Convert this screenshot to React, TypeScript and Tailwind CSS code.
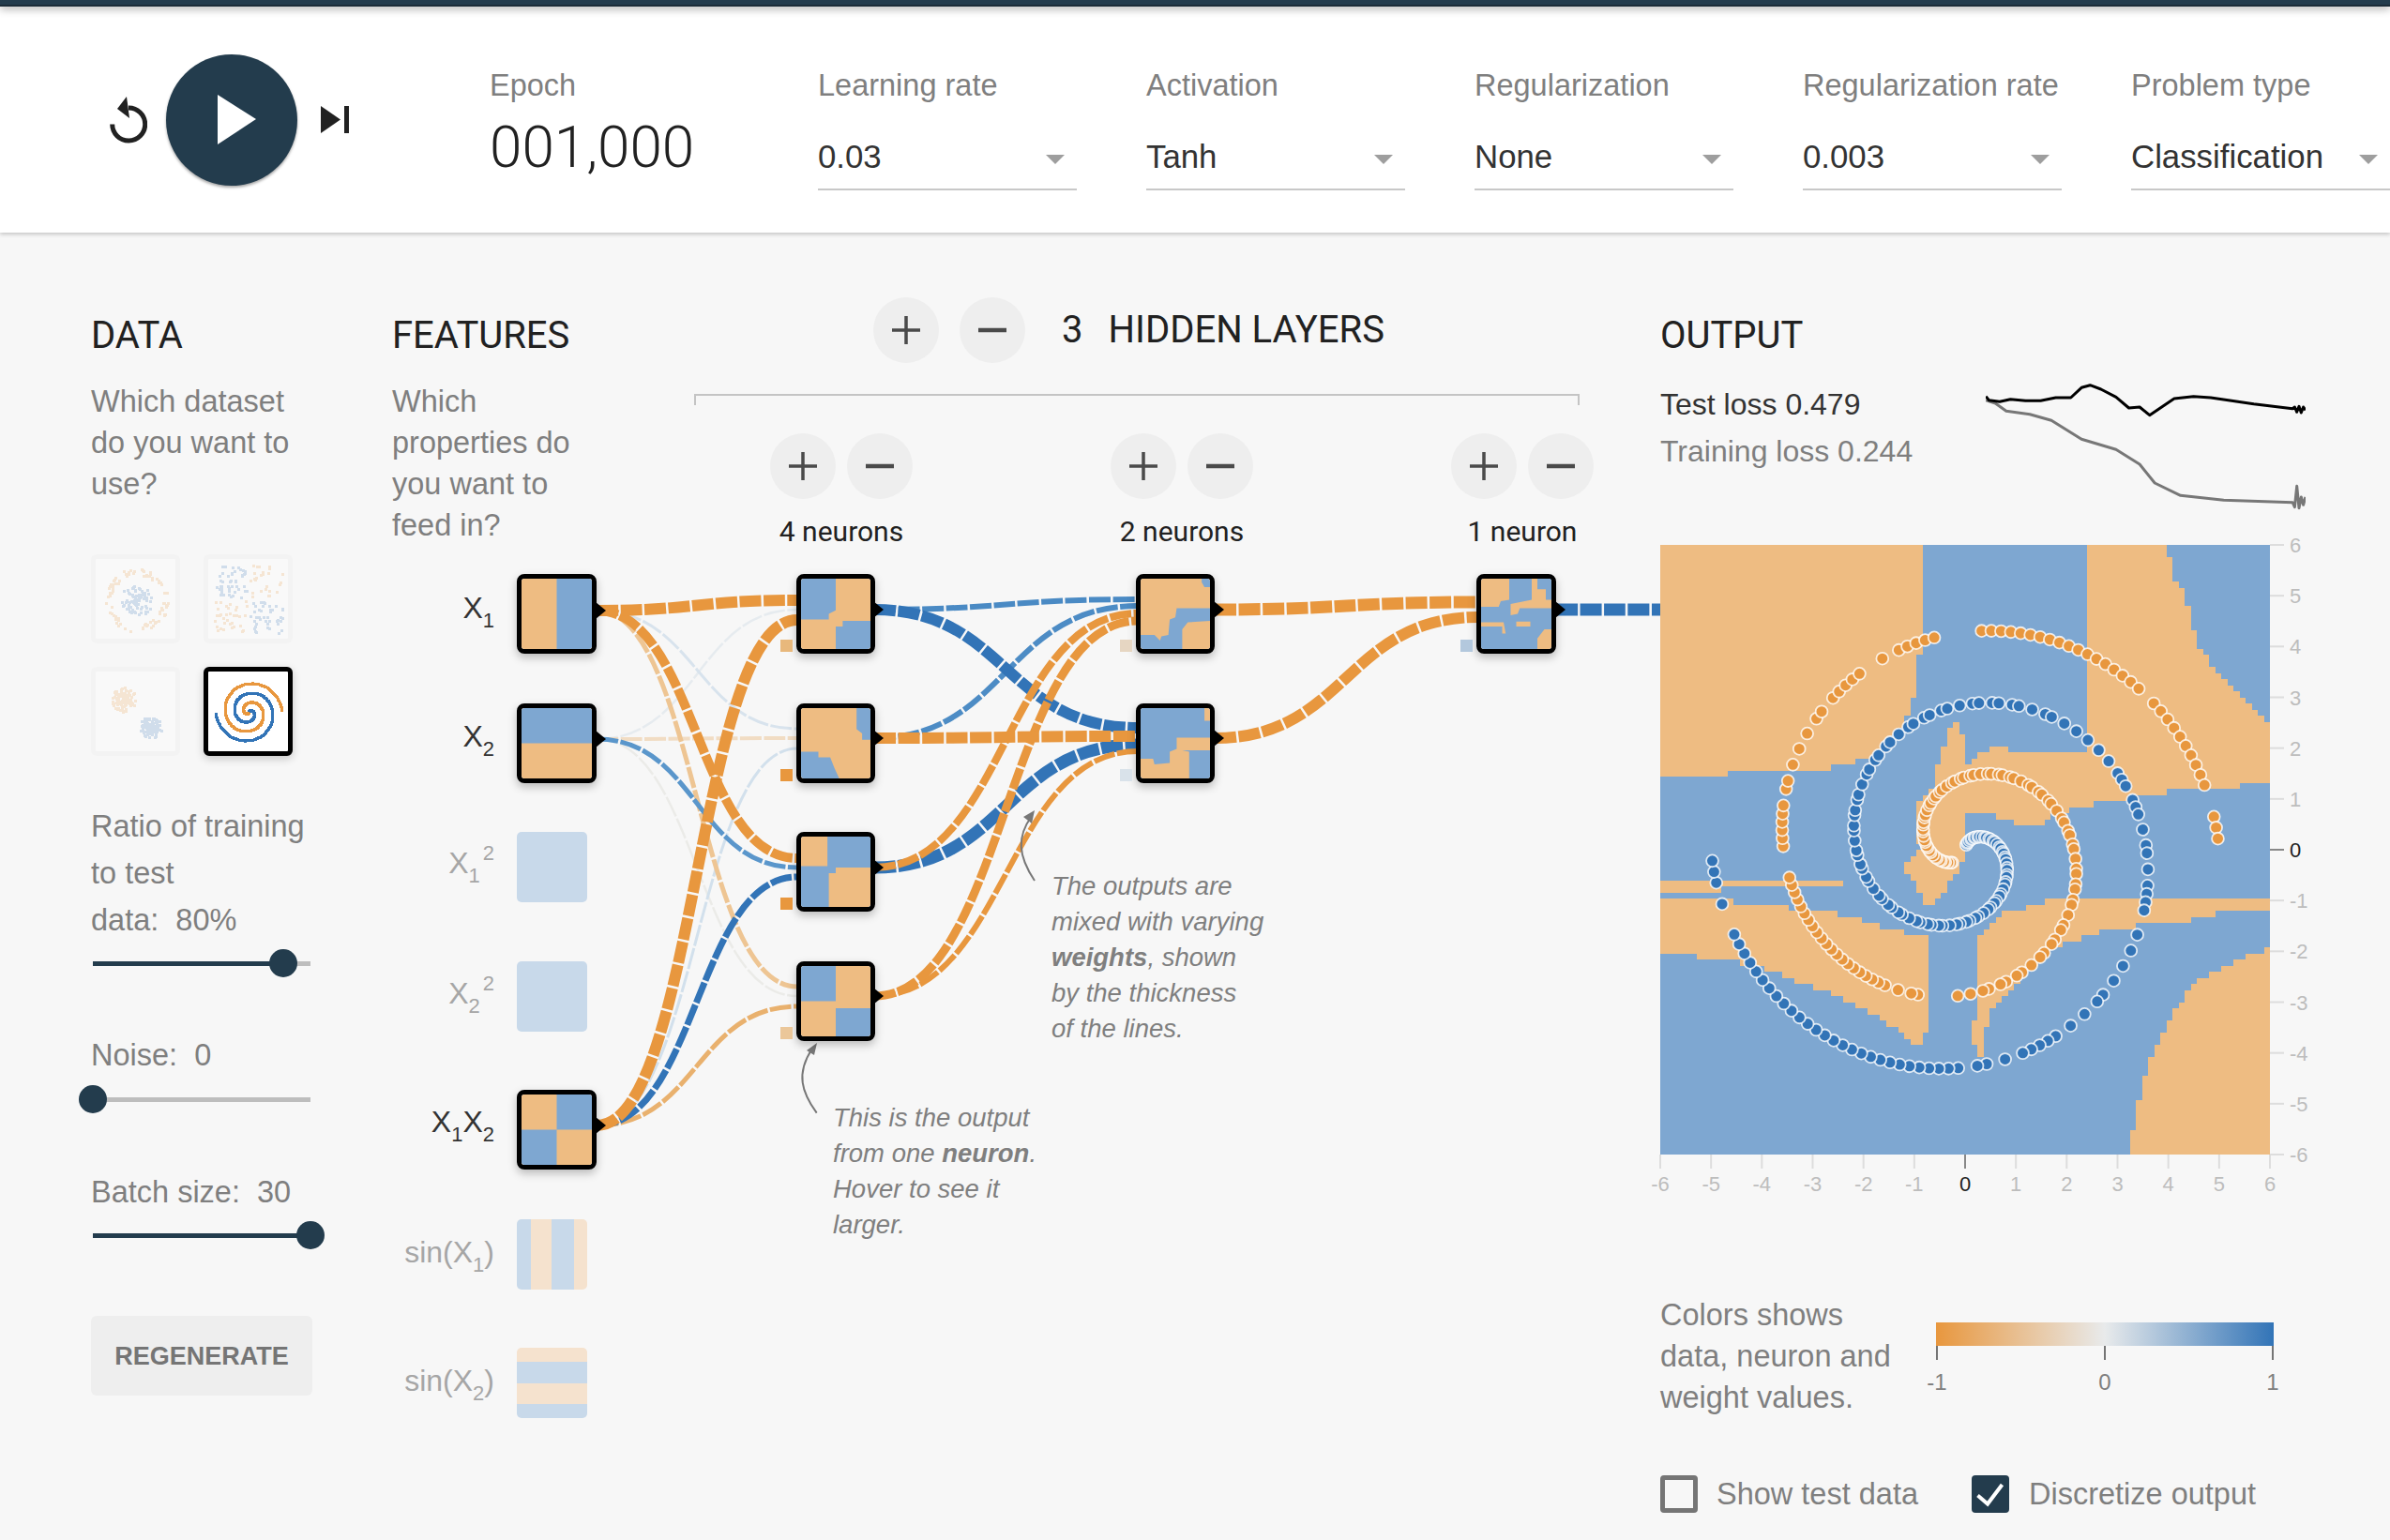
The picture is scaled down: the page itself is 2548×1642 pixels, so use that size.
import React from "react";

const ORANGE = "#eebc82";
const BLUE = "#7ea7d1";
const LINK_ORANGE = "#e8973e";
const LINK_BLUE = "#3274b7";
const NET_X = 418;
const NET_Y = 248;

type Pt = [number, number];

// Stair-step a polygon on the 6.5px cell grid of the decision map
function stairs(zoomPts: Pt[]) {
  const cell = 6.5;
  const snap = (v: number) => Math.round(v / cell) * cell;
  const pts = zoomPts.map(([x, y]): Pt => [snap((x - 22) / 2.24), snap((y - 25) / 2.24)]);
  const out: Pt[] = [];
  pts.forEach((p, idx) => {
    const q = pts[(idx + 1) % pts.length];
    const n = Math.max(Math.abs(q[0] - p[0]), Math.abs(q[1] - p[1])) / cell;
    if (p[0] === q[0] || p[1] === q[1] || n < 1) {
      out.push(p);
      return;
    }
    let py = p[1];
    for (let i = 0; i < n; i++) {
      const x = snap(p[0] + ((q[0] - p[0]) * i) / n);
      const y = snap(p[1] + ((q[1] - p[1]) * i) / n);
      out.push([x, py], [x, y]);
      py = y;
    }
    out.push([q[0], py]);
  });
  return out.map((p) => p.join(",")).join(" ");
}

const mapRegions: Pt[][] = [
  [[22, 25], [648, 25], [648, 290], [634, 300], [634, 375], [615, 420], [590, 470], [540, 530], [430, 548], [430, 562], [340, 565], [22, 578]],
  [[1043, 25], [1230, 25], [1232, 50], [1250, 60], [1250, 110], [1270, 140], [1290, 220], [1310, 270], [1350, 330], [1400, 385], [1478, 460], [1478, 590], [1410, 590], [1400, 605], [1240, 610], [1225, 625], [1100, 630], [1090, 640], [1040, 655], [960, 670], [935, 695], [890, 695], [860, 680], [800, 665], [770, 650], [745, 700], [745, 770], [720, 820], [670, 885], [650, 885], [650, 850], [605, 800], [605, 775], [650, 745], [640, 720], [640, 640], [670, 600], [680, 545], [690, 520], [710, 480], [725, 435], [745, 510], [750, 545], [780, 520], [820, 507], [870, 520], [1043, 515]],
  [[1478, 870], [1478, 895], [1365, 900], [1340, 910], [1225, 925], [1100, 940], [1050, 960], [1000, 975], [975, 990], [940, 1010], [900, 1040], [860, 1090], [840, 1110], [810, 1150], [790, 1200], [790, 1245], [780, 1230], [770, 1190], [765, 1160], [785, 1130], [780, 960], [800, 945], [840, 905], [940, 885], [945, 870]],
  [[22, 870], [195, 870], [200, 885], [440, 900], [450, 910], [540, 930], [550, 945], [660, 960], [660, 1160], [650, 1220], [625, 1215], [610, 1190], [560, 1165], [540, 1150], [420, 1090], [300, 1050], [200, 1015], [50, 1000], [22, 985]],
  [[22, 828], [455, 825], [458, 838], [320, 845], [22, 855]],
  [[1478, 985], [1450, 1005], [1400, 1020], [1345, 1050], [1300, 1080], [1250, 1140], [1230, 1180], [1190, 1280], [1170, 1320], [1160, 1400], [1145, 1450], [1145, 1480], [1478, 1480]],
];

const orangeGaps = new Set([245, 246, 234, 212, 213, 214, 215, 206, 204, 203, 197, 194, 192, 190, 188, 185, 178, 177, 176, 145, 146, 147, 148]);
const blueGaps = new Set([246, 244, 243, 214, 211, 209, 203, 201, 199, 196, 194, 192, 190, 188, 187, 182, 180, 177, 175, 171, 167, 165, 163, 161, 159, 157]);

function spiral(delta: number, gaps: Set<number>, from: number) {
  const pts: Pt[] = [];
  for (let i = from; i < 250; i++) {
    if (gaps.has(i)) continue;
    if (i < 156 && (i * 37) % 11 < 4) continue;
    const r = (i / 250) * 5;
    const t = (1.75 * i * 2 * Math.PI) / 250 + delta;
    pts.push([r * Math.sin(t), r * Math.cos(t)]);
  }
  return pts;
}

const orangeDots = spiral(Math.PI, orangeGaps, 18);
const blueDots = spiral(0, blueGaps, 5);

function seeded(seed: number) {
  let s = seed;
  return () => {
    s = (s * 16807) % 2147483647;
    return s / 2147483647;
  };
}

type Link = { from: Pt; to: Pt; w: number; c: string };
const diag = (s: Pt, t: Pt) => {
  const m = (s[0] + t[0]) / 2;
  return `M${s[0]},${s[1]} C${m},${s[1]} ${m},${t[1]} ${t[0]},${t[1]}`;
};

const X1: Pt = [636, 651];
const X2: Pt = [636, 788];
const XX: Pt = [636, 1200];
const N1: Pt = [932, 650];
const N2: Pt = [932, 787];
const N3: Pt = [932, 925];
const N4: Pt = [932, 1062];
const A: Pt = [1295, 650];
const B: Pt = [1295, 787];

const links: Link[] = [
  { from: X2, to: [850, 1062], w: 2.5, c: "#ebebe8" },
  { from: X2, to: [850, 650], w: 2.5, c: "#e6ebef" },
  { from: X1, to: [850, 777], w: 3, c: "#d8e3ed" },
  { from: XX, to: [850, 798], w: 3, c: "#d2e0ec" },
  { from: X2, to: [850, 787], w: 4, c: "#f1dcc3" },
  { from: X1, to: [850, 1052], w: 5, c: "#eec593" },
  { from: XX, to: [850, 1073], w: 5, c: "#e9b16e" },
  { from: X2, to: [850, 925], w: 5, c: "#5a96cb" },
  { from: XX, to: [850, 935], w: 7, c: LINK_BLUE },
  { from: X1, to: [850, 915], w: 10, c: LINK_ORANGE },
  { from: XX, to: [850, 661], w: 12, c: LINK_ORANGE },
  { from: X1, to: [850, 640], w: 12, c: LINK_ORANGE },
  { from: N1, to: [1213, 639], w: 6, c: "#4a8ac4" },
  { from: N2, to: [1213, 646], w: 6, c: "#4d8cc5" },
  { from: N1, to: [1213, 776], w: 12, c: LINK_BLUE },
  { from: N3, to: [1213, 794], w: 13, c: LINK_BLUE },
  { from: N4, to: [1213, 801], w: 6, c: LINK_ORANGE },
  { from: N3, to: [1213, 654], w: 8, c: LINK_ORANGE },
  { from: N4, to: [1213, 662], w: 9, c: LINK_ORANGE },
  { from: N2, to: [1213, 785], w: 12, c: LINK_ORANGE },
  { from: A, to: [1576, 642], w: 13, c: LINK_ORANGE },
  { from: B, to: [1576, 658], w: 12, c: LINK_ORANGE },
  { from: [1659, 650], to: [1771, 650], w: 13, c: LINK_BLUE },
];

const tips: Pt[] = [X1, X2, XX, N1, N2, N3, N4, A, B, [1659, 650]];

type Pic = { bg: string; polys: { c: string; p: string }[] };
const pics: Record<string, Pic> = {
  x1: { bg: ORANGE, polys: [{ c: BLUE, p: "50,0 100,0 100,100 50,100" }] },
  x2: { bg: ORANGE, polys: [{ c: BLUE, p: "0,0 100,0 100,50 0,50" }] },
  xx: { bg: ORANGE, polys: [{ c: BLUE, p: "50,0 100,0 100,50 50,50" }, { c: BLUE, p: "0,50 50,50 50,100 0,100" }] },
  n1: { bg: ORANGE, polys: [{ c: BLUE, p: "0,0 50,0 50,45 40,50 40,58 0,58" }, { c: BLUE, p: "50,100 50,68 60,68 60,60 100,60 100,100" }] },
  n2: { bg: ORANGE, polys: [{ c: BLUE, p: "80,0 100,0 100,45 88,45 88,36 80,30" }, { c: BLUE, p: "0,62 25,62 25,70 42,70 48,85 55,100 0,100" }] },
  n3: { bg: BLUE, polys: [{ c: ORANGE, p: "0,0 38,0 38,42 0,42" }, { c: ORANGE, p: "100,44 50,44 50,52 40,52 40,100 100,100" }] },
  n4: { bg: ORANGE, polys: [{ c: BLUE, p: "0,0 50,0 50,50 0,50" }, { c: BLUE, p: "50,60 100,60 100,100 50,100" }] },
  a: { bg: ORANGE, polys: [{ c: BLUE, p: "88,0 100,0 100,12 92,12 88,5" }, { c: BLUE, p: "100,42 52,42 50,55 42,58 40,80 30,82 28,88 20,80 0,80 0,100 60,100 60,72 68,62 100,60" }] },
  b: { bg: BLUE, polys: [{ c: ORANGE, p: "92,0 100,0 100,18 92,18" }, { c: ORANGE, p: "100,42 52,42 52,58 42,62 42,78 20,80 18,72 0,72 0,100 70,100 70,62 60,60 100,60" }] },
  c: {
    bg: BLUE,
    polys: [
      { c: ORANGE, p: "0,0 40,0 40,30 28,32 25,40 0,40" },
      { c: ORANGE, p: "72,0 80,0 80,15 92,15 92,30 100,30 100,42 55,42 52,50 42,52 42,36 72,30" },
      { c: ORANGE, p: "50,61 70,61 70,68 50,68" },
      { c: ORANGE, p: "0,62 32,62 35,78 30,78 30,68 0,68" },
      { c: ORANGE, p: "80,100 80,85 90,72 100,72 100,100" },
    ],
  },
};

const PLUS = (
  <svg width="30" height="30" viewBox="0 0 30 30">
    <path d="M0 15H30M15 0V30" stroke="#4a4a4a" strokeWidth="3.5" />
  </svg>
);
const MINUS = (
  <svg width="30" height="30" viewBox="0 0 30 30">
    <path d="M0 15H30" stroke="#4a4a4a" strokeWidth="4.5" />
  </svg>
);

function RoundButton({ minus }: { minus?: boolean }) {
  return (
    <button className="w-[70px] h-[70px] shrink-0 rounded-full bg-[#eeeeee] flex items-center justify-center">
      {minus ? MINUS : PLUS}
    </button>
  );
}

function Field({ label, value }: { label: string; value: string }) {
  return (
    <div className="w-[350px] self-start mt-[62px] shrink-0 font-['Liberation_Sans',sans-serif] font-normal">
      <div className="text-[32.5px] leading-[44px] text-[#7f7f7f]">{label}</div>
      <div className="mt-[31px] w-[276px] h-[59px] border-b-2 border-[#c8c8c8] flex justify-between text-[34.8px] leading-[46px] text-[#333333]">
        <span>{value}</span>
        <svg className="mt-[21px] mr-[13px] shrink-0" width="20" height="10" viewBox="0 0 20 10">
          <path d="M0 0H20L10 10Z" fill="#9e9e9e" />
        </svg>
      </div>
    </div>
  );
}

function Header() {
  return (
    <header className="relative h-[248px] bg-white shadow-[0_2px_4px_rgba(0,0,0,0.2)] flex items-center pt-[7px] z-10">
      <div className="absolute left-0 right-0 top-0 h-[7px] bg-[#233c4d] border-b-2 border-[#1b2c38] shadow-[0_3px_8px_rgba(0,0,0,0.3)]" />
      <svg className="ml-[117px] shrink-0" width="40" height="50" viewBox="117 100 40 50">
        <path d="M119.7 129.5A17.5 17.5 0 1 0 137 112" fill="none" stroke="#212121" strokeWidth="5" />
        <path d="M135 100L125 113L138 123Z" fill="#212121" />
      </svg>
      <button className="ml-[20px] w-[140px] h-[140px] shrink-0 rounded-full bg-[#233c4d] shadow-[0_2px_3px_rgba(0,0,0,0.35)] flex items-center justify-center">
        <svg className="ml-[10px]" width="41" height="53" viewBox="0 0 41 53">
          <path d="M0 0L41 26L0 53Z" fill="#ffffff" />
        </svg>
      </button>
      <svg className="ml-[25px] shrink-0" width="30" height="30" viewBox="0 0 30 30">
        <path d="M0 0L21 14.5L0 29Z" fill="#212121" />
        <rect x="25" y="0" width="5" height="29" fill="#212121" />
      </svg>
      <div className="ml-[150px] w-[350px] self-start mt-[62px] shrink-0">
        <div className="text-[32.5px] leading-[44px] text-[#7f7f7f] font-normal font-['Liberation_Sans',sans-serif]">Epoch</div>
        <div className="mt-[13px] text-[62px] leading-none text-[#212121]">001,000</div>
      </div>
      <Field label="Learning rate" value="0.03" />
      <Field label="Activation" value="Tanh" />
      <Field label="Regularization" value="None" />
      <Field label="Regularization rate" value="0.003" />
      <Field label="Problem type" value="Classification" />
    </header>
  );
}

function DatasetThumb({ kind, selected }: { kind: string; selected?: boolean }) {
  const rects: { x: number; y: number; c: string }[] = [];
  const rand = seeded(kind.length * 977 + kind.charCodeAt(0));
  const add = (x: number, y: number, c: string) => rects.push({ x: Math.round(x), y: Math.round(y), c });
  if (kind === "circle") {
    for (let i = 0; i < 90; i++) {
      const t = rand() * 6.283;
      const r = rand() * 17;
      add(43 + r * Math.cos(t), 43 + r * Math.sin(t), LINK_BLUE);
      const t2 = rand() * 6.283;
      const r2 = 27 + rand() * 7;
      add(43 + r2 * Math.cos(t2), 43 + r2 * Math.sin(t2), LINK_ORANGE);
    }
  } else if (kind === "xor") {
    for (let i = 0; i < 170; i++) {
      const x = 6 + rand() * 72;
      const y = 6 + rand() * 72;
      if (Math.abs(x - 42) < 2 || Math.abs(y - 42) < 2) continue;
      add(x, y, x < 42 === y < 42 ? LINK_BLUE : LINK_ORANGE);
    }
  } else if (kind === "gauss") {
    for (let i = 0; i < 110; i++) {
      const t = rand() * 6.283;
      const r = rand() * 13;
      add(29 + r * Math.cos(t), 29 + r * Math.sin(t), LINK_ORANGE);
      const t2 = rand() * 6.283;
      const r2 = rand() * 12;
      add(58 + r2 * Math.cos(t2), 58 + r2 * Math.sin(t2), LINK_BLUE);
    }
  } else {
    for (let i = 0; i < 250; i++) {
      const r = (i / 250) * 5 * 7.08;
      const t = (1.75 * i * 2 * Math.PI) / 250;
      add(42 + r * Math.sin(t), 42 - r * Math.cos(t), LINK_BLUE);
      add(42 - r * Math.sin(t), 42 + r * Math.cos(t), LINK_ORANGE);
    }
  }
  return (
    <div
      className={
        selected
          ? "w-[95px] h-[95px] border-[5px] border-black rounded-[6px] bg-white shadow-[0_3px_10px_rgba(0,0,0,0.2)]"
          : "w-[95px] h-[95px] border-[5px] border-[#f3f3f3] rounded-[6px] bg-[#f9f9f9]"
      }
    >
      <svg width="85" height="85" viewBox="0 0 85 85" shapeRendering="crispEdges" className={selected ? "" : "opacity-20"}>
        {rects.map((r, i) => (
          <rect key={i} x={r.x} y={r.y} width="3" height="3" fill={r.c} />
        ))}
      </svg>
    </div>
  );
}

function Slider({ pct }: { pct: number }) {
  return (
    <div className="relative w-[232px] h-[5px] ml-[2px] bg-[#bdbdbd]">
      <div className="h-full bg-[#233c4d]" style={{ width: `${pct}%` }} />
      <div
        className="absolute top-[-13px] w-[30px] h-[30px] ml-[-15px] rounded-full bg-[#233c4d]"
        style={{ left: `${pct}%` }}
      />
    </div>
  );
}

const TITLE = "text-[40px] leading-none font-normal text-[#212121] font-[Roboto,sans-serif]";
const BODY = "text-[32.5px] leading-[44px] text-[#7f7f7f] font-normal font-['Liberation_Sans',sans-serif]";

function DataColumn() {
  return (
    <div className={`w-[321px] ml-[97px] pt-[90px] shrink-0 ${BODY}`}>
      <h4 className={TITLE}>DATA</h4>
      <p className="mt-[28px]">
        Which dataset
        <br />
        do you want to
        <br />
        use?
      </p>
      <div className="mt-[53px] grid grid-cols-[95px_95px] gap-x-[25px] gap-y-[25px]">
        <DatasetThumb kind="circle" />
        <DatasetThumb kind="xor" />
        <DatasetThumb kind="gauss" />
        <DatasetThumb kind="spiral" selected />
      </div>
      <p className="mt-[50px] leading-[50px]">
        Ratio of training
        <br />
        to test
        <br />
        data:&nbsp;&nbsp;80%
      </p>
      <div className="mt-[19px]">
        <Slider pct={87.5} />
      </div>
      <p className="mt-[70px] leading-[50px]">Noise:&nbsp;&nbsp;0</p>
      <div className="mt-[20px]">
        <Slider pct={0} />
      </div>
      <p className="mt-[71px] leading-[50px]">Batch size:&nbsp;&nbsp;30</p>
      <div className="mt-[19px]">
        <Slider pct={100} />
      </div>
      <button className="mt-[83px] w-[236px] h-[85px] rounded-[6px] bg-[#eeeeee] text-[27px] font-bold text-[#757575]">
        REGENERATE
      </button>
    </div>
  );
}

function NeuronControl({ label }: { label: string }) {
  return (
    <div className="w-[152px] shrink-0">
      <div className="flex justify-between">
        <RoundButton />
        <RoundButton minus />
      </div>
      <div className="mt-[17px] text-center text-[30px] leading-[36px] font-normal text-[#212121] whitespace-nowrap">{label}</div>
    </div>
  );
}

function Node({ x, y, w, pic }: { x: number; y: number; w: number; pic: string }) {
  const p = pics[pic];
  return (
    <div
      className="absolute h-[85px] border-[5px] border-black rounded-[8px] overflow-hidden shadow-[0_4px_10px_rgba(0,0,0,0.25)]"
      style={{ left: x - NET_X, top: y - NET_Y, width: w }}
    >
      <svg className="w-full h-full" viewBox="0 0 100 100" preserveAspectRatio="none">
        <rect width="100" height="100" fill={p.bg} />
        {p.polys.map((q, i) => (
          <polygon key={i} points={q.p} fill={q.c} />
        ))}
      </svg>
    </div>
  );
}

function FlatFeature({ y, stripes }: { y: number; stripes?: string }) {
  return (
    <div
      className={`absolute left-[133px] w-[75px] h-[75px] rounded-[5px] bg-[#c8d9ea] overflow-hidden ${stripes ?? ""}`}
      style={{ top: y - NET_Y }}
    />
  );
}

function FeatureLabel({ y, active, children }: { y: number; active?: boolean; children: React.ReactNode }) {
  return (
    <div
      className={`absolute right-[1243px] text-[32px] leading-none whitespace-nowrap font-normal font-['Liberation_Sans',sans-serif] ${active ? "text-[#333333]" : "text-[#a6a6a6]"}`}
      style={{ top: y - 27 - NET_Y }}
    >
      {children}
    </div>
  );
}

const Sub = ({ children }: { children: React.ReactNode }) => (
  <span className="relative top-[10px] text-[22px]">{children}</span>
);
const Sup = ({ children }: { children: React.ReactNode }) => (
  <span className="relative top-[-14px] ml-[3px] text-[22px]">{children}</span>
);

const biases: { x: number; y: number; c: string }[] = [
  { x: 832, y: 682, c: "#e8b87c" },
  { x: 832, y: 820, c: "#e8973e" },
  { x: 832, y: 957, c: "#e8973e" },
  { x: 832, y: 1095, c: "#ebc79a" },
  { x: 1194, y: 682, c: "#e6d6c2" },
  { x: 1194, y: 820, c: "#d9e2ea" },
  { x: 1557, y: 682, c: "#b3c8dd" },
];

function Network() {
  return (
    <div className="relative w-[1352px] h-[1394px] shrink-0">
      <div className="flex">
        <div className={`w-[322px] pt-[90px] shrink-0 ${BODY}`}>
          <h4 className={TITLE}>FEATURES</h4>
          <p className="mt-[28px]">
            Which
            <br />
            properties do
            <br />
            you want to
            <br />
            feed in?
          </p>
        </div>
        <div className="w-[944px] pt-[69px] shrink-0">
          <div className="flex items-center ml-[191px]">
            <RoundButton />
            <div className="ml-[22px]">
              <RoundButton minus />
            </div>
            <span className="ml-[39px] text-[40px] font-normal text-[#212121]">3</span>
            <span className="ml-[27px] text-[40px] font-normal text-[#212121] whitespace-nowrap">HIDDEN LAYERS</span>
          </div>
          <div className="mt-[33px] h-[12px] border-t-2 border-x-2 border-[#c4c4c4]" />
          <div className="mt-[30px] ml-[81px] flex gap-[211px]">
            <NeuronControl label="4 neurons" />
            <NeuronControl label="2 neurons" />
            <NeuronControl label="1 neuron" />
          </div>
        </div>
      </div>

      <svg className="absolute left-0 top-0 pointer-events-none" width="1352" height="1394" viewBox={`${NET_X} ${NET_Y} 1352 1394`} fill="none">
        {links.map((l, i) => (
          <path key={i} d={diag(l.from, l.to)} stroke={l.c} strokeWidth={l.w} strokeDasharray="23 2.5" />
        ))}
        <path d="M1103 939C1085 912 1084 892 1100 870" stroke="#777777" strokeWidth="2" />
        <path d="M1103 864L1091 871L1100 878Z" fill="#777777" />
        <path d="M870.7 1186.7C855 1165 848 1145 866 1118" stroke="#777777" strokeWidth="2" />
        <path d="M871 1112L860 1120L868 1125Z" fill="#777777" />
      </svg>

      <Node x={551} y={612} w={85} pic="x1" />
      <Node x={551} y={750} w={85} pic="x2" />
      <Node x={551} y={1162} w={85} pic="xx" />
      <FlatFeature y={887} />
      <FlatFeature y={1025} />
      <FlatFeature y={1300} stripes="bg-[linear-gradient(to_right,#c8d9ea_20%,#f5e2ce_20%,#f5e2ce_49%,#c8d9ea_49%,#c8d9ea_81%,#f5e2ce_81%)]" />
      <FlatFeature y={1437} stripes="bg-[linear-gradient(to_bottom,#f5e2ce_20%,#c8d9ea_20%,#c8d9ea_51%,#f5e2ce_51%,#f5e2ce_80%,#c8d9ea_80%)]" />

      <Node x={849} y={612} w={84} pic="n1" />
      <Node x={849} y={750} w={84} pic="n2" />
      <Node x={849} y={887} w={84} pic="n3" />
      <Node x={849} y={1025} w={84} pic="n4" />
      <Node x={1211} y={612} w={84} pic="a" />
      <Node x={1211} y={750} w={84} pic="b" />
      <Node x={1574} y={612} w={85} pic="c" />

      <svg className="absolute left-0 top-0 pointer-events-none" width="1352" height="1394" viewBox={`${NET_X} ${NET_Y} 1352 1394`}>
        {tips.map(([x, y], i) => (
          <path key={i} d={`M${x - 1} ${y - 9}L${x + 10} ${y}L${x - 1} ${y + 9}Z`} fill="#000000" />
        ))}
      </svg>

      {biases.map((b, i) => (
        <div
          key={i}
          className="absolute w-[12.5px] h-[12.5px]"
          style={{ left: b.x - NET_X, top: b.y - NET_Y, background: b.c }}
        />
      ))}

      <FeatureLabel y={659} active>X<Sub>1</Sub></FeatureLabel>
      <FeatureLabel y={796} active>X<Sub>2</Sub></FeatureLabel>
      <FeatureLabel y={931}>X<Sub>1</Sub><Sup>2</Sup></FeatureLabel>
      <FeatureLabel y={1070}>X<Sub>2</Sub><Sup>2</Sup></FeatureLabel>
      <FeatureLabel y={1207} active>X<Sub>1</Sub>X<Sub>2</Sub></FeatureLabel>
      <FeatureLabel y={1346}>sin(X<Sub>1</Sub>)</FeatureLabel>
      <FeatureLabel y={1483}>sin(X<Sub>2</Sub>)</FeatureLabel>

      <p className="absolute left-[703px] top-[678px] text-[27.5px] leading-[38px] italic font-normal text-[#7f7f7f] whitespace-nowrap font-['Liberation_Sans',sans-serif]">
        The outputs are
        <br />
        mixed with varying
        <br />
        <b className="font-bold">weights</b>, shown
        <br />
        by the thickness
        <br />
        of the lines.
      </p>
      <p className="absolute left-[470px] top-[925px] text-[27.5px] leading-[38px] italic font-normal text-[#7f7f7f] whitespace-nowrap font-['Liberation_Sans',sans-serif]">
        This is the output
        <br />
        from one <b className="font-bold">neuron</b>.
        <br />
        Hover to see it
        <br />
        larger.
      </p>
    </div>
  );
}

const lossBlack: Pt[] = [[778, 368], [785, 380], [810, 385], [835, 377], [870, 382], [905, 382], [940, 372], [975, 372], [1000, 340], [1020, 332], [1045, 345], [1080, 370], [1110, 405], [1135, 402], [1158, 428], [1215, 375], [1260, 368], [1300, 372], [1400, 392], [1490, 407], [1495, 402], [1500, 418], [1505, 400], [1510, 420], [1515, 402], [1520, 412]];
const lossGray: Pt[] = [[778, 380], [800, 390], [825, 415], [880, 425], [930, 445], [1000, 505], [1080, 538], [1135, 585], [1170, 645], [1230, 685], [1330, 700], [1490, 707], [1495, 722], [1500, 655], [1505, 725], [1510, 690], [1515, 715], [1520, 690]];
const lossPath = (pts: Pt[]) =>
  pts.map(([x, y], i) => `${i ? "L" : "M"}${(x / 2.178 - 357).toFixed(1)} ${(y / 3 - 106).toFixed(1)}`).join(" ");

function Plot() {
  const cell = 650 / 12;
  const ticks = [-6, -5, -4, -3, -2, -1, 0, 1, 2, 3, 4, 5, 6];
  return (
    <svg className="overflow-visible block" width="700" height="700" viewBox="0 0 700 700">
      <rect width="650" height="650" fill={BLUE} />
      <g shapeRendering="crispEdges">
        {mapRegions.map((r, i) => (
          <polygon key={i} points={stairs(r)} fill={ORANGE} />
        ))}
      </g>
      {orangeDots.map(([x, y], i) => (
        <circle key={i} cx={325 + x * cell} cy={325 - y * cell} r="6.4" fill={LINK_ORANGE} stroke="#ffffff" strokeOpacity="0.8" strokeWidth="1.8" />
      ))}
      {blueDots.map(([x, y], i) => (
        <circle key={i} cx={325 + x * cell} cy={325 - y * cell} r="6.4" fill={LINK_BLUE} stroke="#ffffff" strokeOpacity="0.8" strokeWidth="1.8" />
      ))}
      {ticks.map((t) => {
        const p = 325 + t * cell;
        const zero = t === 0;
        return (
          <g key={t} fontSize="22" fontWeight="400" fill={zero ? "#212121" : "#bdbdbd"} fontFamily="Liberation Sans, sans-serif">
            <path d={`M${p} 650V665`} stroke={zero ? "#888888" : "#dddddd"} strokeWidth="2" />
            <path d={`M650 ${p}H665`} stroke={zero ? "#888888" : "#dddddd"} strokeWidth="2" />
            <text x={p} y="689" textAnchor="middle">{t}</text>
            <text x="671" y={650 - p + 8}>{t}</text>
          </g>
        );
      })}
    </svg>
  );
}

function OutputColumn() {
  return (
    <div className={`w-[778px] pt-[90px] shrink-0 ${BODY}`}>
      <h4 className={TITLE}>OUTPUT</h4>
      <div className="mt-[28px] h-[140px] flex justify-between text-[32px] leading-[50px]">
        <div>
          <div className="text-[#333333]">Test loss 0.479</div>
          <div>Training loss 0.244</div>
        </div>
        <svg className="mr-[90px]" width="341" height="140" viewBox="0 0 341 140" fill="none">
          <path d={lossPath(lossGray)} stroke="#777777" strokeWidth="3" strokeLinejoin="round" />
          <path d={lossPath(lossBlack)} stroke="#000000" strokeWidth="3" strokeLinejoin="round" />
        </svg>
      </div>
      <div className="mt-[35px]">
        <Plot />
      </div>
      <div className="mt-[99px] flex">
        <p className="w-[294px] leading-[44px]">
          Colors shows
          <br />
          data, neuron and
          <br />
          weight values.
        </p>
        <div className="w-[360px] mt-[30px]">
          <div className="h-[25px] bg-[linear-gradient(to_right,#e8973e,#e8eaeb,#3274b7)]" />
          <div className="flex justify-between text-[24px] leading-none">
            {["-1", "0", "1"].map((v) => (
              <div key={v} className="w-[2px] flex flex-col items-center">
                <div className="w-[2px] h-[15px] shrink-0 bg-[#757575]" />
                <div className="mt-[12px]">{v}</div>
              </div>
            ))}
          </div>
        </div>
      </div>
      <div className="mt-[61px] h-[40px] flex items-center">
        <div className="w-[40px] h-[40px] shrink-0 border-[5px] border-[#757575] rounded-[4px]" />
        <span className="ml-[20px]">Show test data</span>
        <div className="ml-[57px] w-[40px] h-[40px] shrink-0 rounded-[4px] bg-[#233c4d]">
          <svg width="40" height="40" viewBox="0 0 40 40" fill="none">
            <path d="M6.5 21.5L17 30.5L32.5 10" stroke="#ffffff" strokeWidth="4" />
          </svg>
        </div>
        <span className="ml-[21px]">Discretize output</span>
      </div>
    </div>
  );
}

export default function App() {
  return (
    <div className="w-[2548px] h-[1642px] overflow-hidden bg-[#f7f7f7] font-[Roboto,sans-serif] font-light">
      <Header />
      <main className="flex">
        <DataColumn />
        <Network />
        <OutputColumn />
      </main>
    </div>
  );
}
